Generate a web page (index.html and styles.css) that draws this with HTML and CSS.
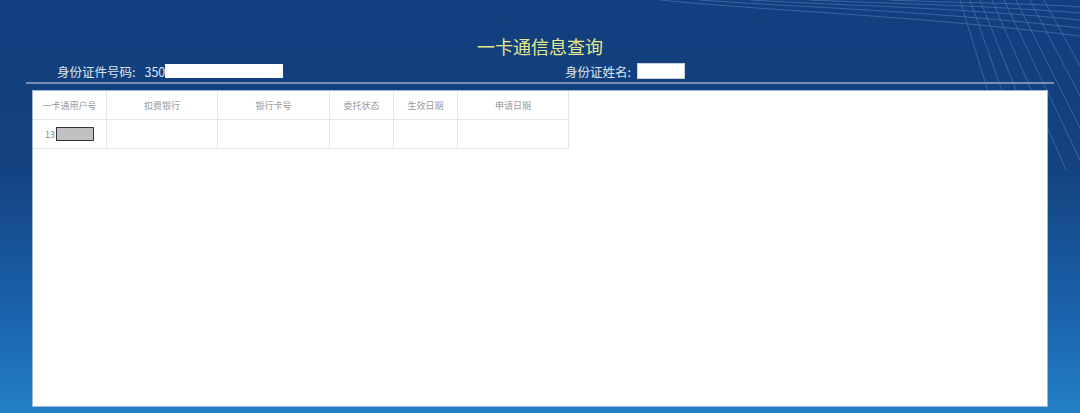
FILE: index.html
```html
<!DOCTYPE html>
<html lang="zh-CN">
<head>
  <meta charset="UTF-8">
  <meta name="viewport" content="width=device-width, initial-scale=1.0">
  <title>一卡通信息查询</title>
  <link rel="stylesheet" href="styles.css">
</head>
<body>
  <svg class="decor" width="420" height="170" viewBox="0 0 420 170">
    <g fill="none" stroke="#6aa3dc" stroke-width="0.8" opacity="0.5">
      <path d="M0 0 C120 12 240 14 420 36"/>
      <path d="M40 0 C150 8 260 10 420 28"/>
      <path d="M90 0 C190 6 290 7 420 20"/>
      <path d="M150 0 C240 4 320 5 420 13"/>
      <path d="M230 0 C300 3 370 3 420 7"/>
      <path d="M300 0 L352 170"/>
      <path d="M310 0 L370 170"/>
      <path d="M320 0 L388 170"/>
      <path d="M332 0 L406 170"/>
      <path d="M344 0 L420 160"/>
      <path d="M356 0 L420 128"/>
      <path d="M370 0 L420 96"/>
      <path d="M384 0 L420 66"/>
    </g>
  </svg>

  <div class="page">
    <h1 class="title">一卡通信息查询</h1>

    <div class="info-row">
      <div class="field field-id">
        <span class="label">身份证件号码:</span>
        <span class="value">350</span><span class="mask mask-id"></span>
      </div>
      <div class="field field-name">
        <span class="label">身份证姓名:</span>
        <span class="mask mask-name"></span>
      </div>
    </div>
    <div class="divider"></div>

    <div class="panel">
      <table class="card-table">
        <thead>
          <tr>
            <th class="col-user">一卡通用户号</th>
            <th class="col-bank">扣费银行</th>
            <th class="col-card">银行卡号</th>
            <th class="col-state">委托状态</th>
            <th class="col-date">生效日期</th>
            <th class="col-apply">申请日期</th>
          </tr>
        </thead>
        <tbody>
          <tr>
            <td class="user-cell"><span class="user-no">13</span><span class="mask mask-user"></span></td>
            <td></td>
            <td></td>
            <td></td>
            <td></td>
            <td></td>
          </tr>
        </tbody>
      </table>
    </div>
  </div>
</body>
</html>
```

FILE: styles.css
```css
/* General styling */
html, body {
  height: 100%;
}

body {
  margin: 0;
  padding: 0;
  position: relative;
  overflow: hidden;
  font-family: "Noto Sans CJK SC", "Noto Sans", sans-serif;
  background: linear-gradient(180deg, #123f7d 0%, #13427f 40%, #1a62ab 75%, #2380c6 100%);
}

.decor {
  position: absolute;
  top: 0;
  right: 0;
  pointer-events: none;
}

.page {
  position: relative;
  padding: 0 26px 0 26px;
}

.title {
  margin: 0;
  padding-top: 33px;
  height: 27px;
  line-height: 27px;
  text-align: center;
  font-size: 18px;
  font-weight: normal;
  color: #e6ea8a;
}

/* id / name row */
.info-row {
  display: flex;
  align-items: center;
  height: 22px;
  padding-left: 31px;
  color: #dfe6f2;
  font-size: 12.5px;
}

.field {
  display: flex;
  align-items: center;
}

.field-id {
  width: 508px;
}

.label {
  margin-right: 9px;
}

.mask {
  display: inline-block;
  background: #fff;
}

.mask-id {
  width: 118px;
  height: 14px;
}

.field-name .label {
  margin-right: 6px;
}

.mask-name {
  width: 46px;
  height: 14px;
  border: 1px solid #c8d0dc;
}

.divider {
  height: 2px;
  background: #7b8fb0;
  margin-bottom: 6px;
}

/* table panel */
.panel {
  margin: 0 6px;
  height: 315px;
  background: #fff;
  border: 1px solid #9db6da;
}

.card-table {
  border-collapse: collapse;
  table-layout: fixed;
  width: 536px;
  font-size: 9px;
  color: #999;
}

.card-table th,
.card-table td {
  height: 28px;
  padding: 0;
  border: 1px solid #e6e6ee;
  text-align: center;
  font-weight: normal;
}

.card-table tr > :first-child {
  border-left: none;
}

.card-table thead th {
  border-top: none;
}

.col-user { width: 73px; }
.col-bank { width: 110px; }
.col-card { width: 111px; }
.col-state { width: 63px; }
.col-date { width: 63px; }
.col-apply { width: 110px; }

.user-cell {
  white-space: nowrap;
  padding-left: 4px;
}

.user-no {
  color: #888;
  vertical-align: middle;
}

.mask-user {
  width: 36px;
  height: 12px;
  margin-left: 1px;
  background: #c0c0c0;
  border: 1px solid #333;
  vertical-align: middle;
}
```
